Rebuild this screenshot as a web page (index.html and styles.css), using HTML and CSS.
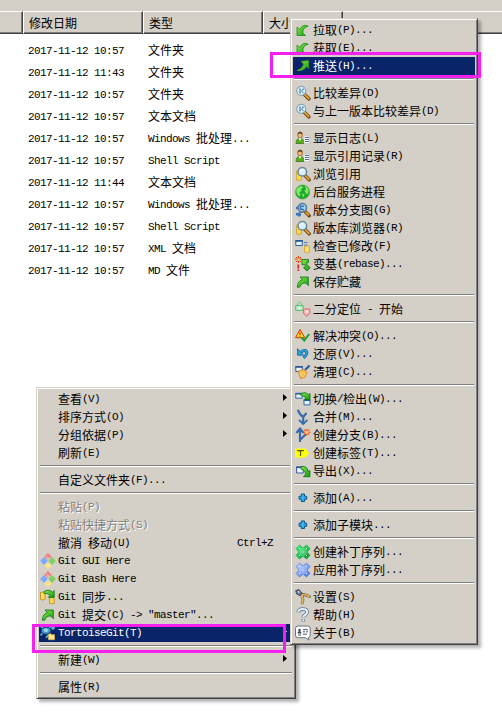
FILE: index.html
```html
<!DOCTYPE html>
<html lang="zh-CN">
<head>
<meta charset="utf-8">
<title>文件夹</title>
<link rel="stylesheet" href="styles.css">
</head>
<body>
<svg class="defs" width="0" height="0" aria-hidden="true">
  <defs>
    <linearGradient id="leaf" x1="0" y1="0" x2="1" y2="1"><stop offset="0" stop-color="#8cec4e"/><stop offset="1" stop-color="#129a10"/></linearGradient>
    <linearGradient id="sky" x1="0" y1="0" x2="1" y2="1"><stop offset="0" stop-color="#c3d4ff"/><stop offset="1" stop-color="#3b6fe8"/></linearGradient>
    <linearGradient id="mint" x1="0" y1="0" x2="1" y2="1"><stop offset="0" stop-color="#3dff78"/><stop offset="1" stop-color="#048a2c"/></linearGradient>
  </defs>
  <symbol id="pull" viewBox="0 0 16 16"><path d="M2 5v8.5h8.5L7.8 10.8Q7.8 5.5 13.2 4.2Q8 1.4 4.7 7.4z" fill="url(#leaf)" stroke="#0c8210" stroke-width=".7"/></symbol>
  <symbol id="push" viewBox="0 0 16 16"><path d="M13.6 2.4v8l-2-1.8Q8.5 13.6 2 12.5Q7.5 10.5 8.7 6L6 3.4z" fill="url(#leaf)" stroke="#4aa51a" stroke-width=".6"/></symbol>
  <symbol id="commit" viewBox="0 0 16 16"><path d="M5 3h8.3v8.6L10.8 9Q6.6 8.4 4.6 13.2H2.3Q2.5 7.2 7.4 5.5z" fill="url(#leaf)" stroke="#08720a" stroke-width=".8"/></symbol>
  <symbol id="lens" viewBox="0 0 16 16"><path d="M9.5 9.5l4.3 4.3" stroke="#70420e" stroke-width="3.6" stroke-linecap="round"/><path d="M9.8 9.6l3.9 3.9" stroke="#efae3c" stroke-width="1.7" stroke-linecap="round"/><circle cx="6.2" cy="5.8" r="4.5" fill="#d8f1fc" stroke="#8aa5b5" stroke-width="1.2"/><path d="M4 4.2h2M7 4.2h2M4 6h4M4 7.7h2M7.5 7.7h1" stroke="#34688c" stroke-width=".9"/></symbol>
  <symbol id="log" viewBox="0 0 16 16"><path d="M1 13.5q0-5 4-5.5 4 .5 4 5.5z" fill="#58ae18" stroke="#2e6d0b" stroke-width=".7"/><path d="M3.5 8h3L5 11z" fill="#fff"/><ellipse cx="5" cy="5" rx="2.3" ry="2.9" fill="#f5bd73" stroke="#7c4a15" stroke-width=".7"/><path d="M2.6 4.3q.5-3 2.9-2.5Q7.8 2 7.4 4.2L5 3.5z" fill="#644018"/><path d="M9 6h5.5v7.5H9z" fill="#f8fafc" stroke="#a9b2bd" stroke-width=".5"/><path d="M10 7.5h4M10 9.5h4M10 11.5h4" stroke="#59708a"/></symbol>
  <symbol id="browse" viewBox="0 0 16 16"><path d="M1.5 5h4l1 1v8q-2.5 1-5 0z" fill="#f7d54d" stroke="#c5981e" stroke-width=".7"/><path d="M10 9.5l4.2 4.2" stroke="#70420e" stroke-width="3.4" stroke-linecap="round"/><path d="M10.3 9.7l3.7 3.7" stroke="#efae3c" stroke-width="1.6" stroke-linecap="round"/><circle cx="7.3" cy="5.7" r="4.3" fill="#d6effa" stroke="#6e8798" stroke-width="1.5"/><path d="M5.4 5.2q1-2 3-1.5" stroke="#fff" stroke-width="1.3" fill="none"/></symbol>
  <symbol id="globe" viewBox="0 0 16 16"><circle cx="7.5" cy="8" r="7" fill="#1fa828" stroke="#3c9a40" stroke-width=".6"/><path d="M1.3 5.7Q3.5 2 6.6 2l1.6 2-2.2 1 .5 2.2-2.1 1.1L5.6 11 4 12.3Q1 9.5 1.3 5.7zM9.5 2q4 1.4 4.2 5.1l-1.3 3.5-2.2-2-.8-2 1.7-1.1zM7.1 9.2l2.7 1.3-2 3.3z" fill="#7de86a"/></symbol>
  <symbol id="graph" viewBox="0 0 16 16"><path d="M4.2 14.5v-4M1 6h5v5M1 12l5 1" stroke="#3973b9" stroke-width="2.4" fill="none"/><path d="M10 9.5l4.2 4.2" stroke="#70420e" stroke-width="3.4" stroke-linecap="round"/><path d="M10.3 9.7l3.7 3.7" stroke="#efae3c" stroke-width="1.6"/><circle cx="7.3" cy="5.7" r="4.2" fill="#a9cfe5" stroke="#557d9d" stroke-width="1.5"/><path d="M5.4 7.7V4.2h3.5M6 7l3 1" stroke="#3973b9" stroke-width="1.4" fill="none"/></symbol>
  <symbol id="check" viewBox="0 0 16 16"><path d="M.8 2.5h6.5v5H.8z" fill="#e9f2ff" stroke="#315f9c"/><path d="M.5 2h7.2v1.8H.5z" fill="#295795"/><path d="M9 4.5h3.5M9 7h3.5" stroke="#4c79aa"/><path d="M9.5 8.5q2.5-1 5 0v5.7q-2.5 1-5 0z" fill="#ffde65" stroke="#c59a29" stroke-width=".7"/></symbol>
  <symbol id="rebase" viewBox="0 0 16 16"><path d="M3.5 0v7M0 3.2h7M1 1l5 5M6 1L1 6" stroke="#ef3b0c" stroke-width="1"/><circle cx="3.5" cy="3.4" r="1.5" fill="#ffc16a"/><path d="M3.3 8.5v4M3.3 13.5V15" stroke="#e51a1a" stroke-width="1.7"/><path d="M7 3.5h6.5v3L12 5.8v2.7l3 3.2-3 3.3-3.5-3.2 1.8-.6V8.8H7z" fill="url(#leaf)" stroke="#08720a" stroke-width=".8"/></symbol>
  <symbol id="bisect" viewBox="0 0 16 16"><path d="M.7 4.5h7.5v5H.7zM2.5 4.4V2.8L4.5.9l2 1.9v1.6" fill="#b8e8bc" stroke="#63bb76"/><path d="M3.5 6h2v2h-2z" fill="#fff"/><path d="M8.5 8h6.3v4.5l-3.1 2.7-3.2-2.7z" fill="#f4b1b1" stroke="#e56c70"/><path d="M10.8 9.5h1.9v2.3h-1.9z" fill="#fff"/></symbol>
  <symbol id="resolve" viewBox="0 0 16 16"><path d="M5 1.5L9.8 9.7H.6z" fill="#ffe322" stroke="#e22b0d" stroke-width="1" stroke-linejoin="round"/><path d="M5 4.2v2.5M5 7.5v1.1" stroke="#e22b0d" stroke-width="1.3"/><path d="M6.5 9.5l2.8 3L14.2 6" fill="none" stroke="#18a12b" stroke-width="2"/></symbol>
  <symbol id="revert" viewBox="0 0 16 16"><path d="M5.5 6.6Q7.5 4 10 4.5q4.2 1.6-1.4 7.6" fill="none" stroke="#165e9d" stroke-width="3"/><path d="M2.5 2.6v6.6h6z" fill="#2aa4dc" stroke="#165e9d" stroke-width=".8"/><path d="M5.5 6.6Q7.5 4 10 4.5q4.2 1.6-1.2 7.2" fill="none" stroke="#2aa4dc" stroke-width="1.6"/></symbol>
  <symbol id="clean" viewBox="0 0 16 16"><path d="M.8 2.5h6.5v5H.8z" fill="#e9f2ff" stroke="#315f9c"/><path d="M.5 2h7.2v1.8H.5z" fill="#295795"/><path d="M10 6L14.6 1.5" stroke="#2c5b9d" stroke-width="2.2"/><path d="M3 7.2l5.6-2 3.7 3.3-2.5 4.9-4.2 1z" fill="#f5ba49" stroke="#c57a19" stroke-width=".7"/><path d="M4.7 8.8l3.9 4.4M7.1 7.6l3.1 3.4" stroke="#ffe49a"/></symbol>
  <symbol id="switch" viewBox="0 0 16 16"><path d="M.8 2.3h6.4v4.9H.8zM9 8.6h6v5.3H9z" fill="#e7f2ff" stroke="#2f69a4"/><path d="M.5 2h7v1.5h-7zM8.7 8.4h6.6V10H8.7z" fill="#246097"/><path d="M5 3.6q5-3.9 8.4.1L15 2.5v6H9.6l1.5-1.8Q8 4.7 5 3.6z" fill="url(#leaf)" stroke="#08720a" stroke-width=".8"/></symbol>
  <symbol id="merge" viewBox="0 0 16 16"><path d="M3 .8q1 4.5 5 7M11.5 4L8.2 8v6.3" fill="none" stroke="#396cae" stroke-width="2.2"/><path d="M3.9 10.8L8.2 15l4.3-4.2" fill="none" stroke="#396cae" stroke-width="1.8"/></symbol>
  <symbol id="branch" viewBox="0 0 16 16"><path d="M5 15V2M1.3 6L5 1.6 8.7 6M5.5 12.5L11 7" fill="none" stroke="#396cae" stroke-width="2.2"/><path d="M11.8 1.7v7M8.5 5.2h7M9.3 2.7l5 5M14.3 2.7l-5 5" stroke="#f04a17" stroke-width="1.1"/><circle cx="11.8" cy="5.2" r="1.7" fill="#ffc66e"/></symbol>
  <symbol id="tag" viewBox="0 0 16 16"><path d="M0 3.5h10.5l3.5 4.5-3.5 4.5H0z" fill="#ff0"/><path d="M2.2 5.7h6.6M5.5 5.7v5" stroke="#4a5707" stroke-width="1.2"/></symbol>
  <symbol id="export" viewBox="0 0 16 16"><path d="M1.6 4h6.6v6H1.6z" fill="#eaf3ff" stroke="#315f9c"/><path d="M1.1 3.6h7.5v1.5H1.1z" fill="#295795"/><path d="M6.2 3.6q6.5-.9 6.7 4.9l2-1v6.2H8.4l2-2Q10.8 7 6.2 6.2z" fill="url(#leaf)" stroke="#08720a" stroke-width=".8"/></symbol>
  <symbol id="add" viewBox="0 0 16 16"><path d="M6.3 4h3.2v2.2h2.2v3.1H9.5v2.2H6.3V9.3H4.1V6.2h2.2z" fill="#2ba5dc" stroke="#0d578f"/><path d="M7.8 5v5" stroke="#58c5ee"/></symbol>
  <symbol id="patch" viewBox="0 0 16 16"><path d="M4.5 1L8 4l3.5-3L15 4.5 12.2 8l2.8 3.5-3.5 3.5L8 12.3 4.5 15 1 11.5 3.8 8 1 4.5z" stroke-width=".6" stroke-linejoin="round"/><path d="M5 5l3-1.5L11 5l1.5 3-1.5 3-3 1.5L5 11 3.5 8z" fill="#fff" fill-opacity=".22" stroke="none"/><path d="M4 4.5h1M11 4.5h1M7.5 8h1M4 11.5h1M11 11.5h1" stroke="#fff"/></symbol>
  <symbol id="settings" viewBox="0 0 16 16"><path d="M6 5q4 .5 8.5 2.5M6 5q3 4.5 1.2 9" fill="none" stroke="#775c2c" stroke-width="2.9" stroke-linecap="round"/><path d="M6.5 5.3q4 .2 7.9 2.2M6.5 6q2.3 4.3.7 8.3" fill="none" stroke="#e6bd77" stroke-width="1.6" stroke-linecap="round"/><path d="M.7 1.5L4.2.6 7.1 4.5 5 6.7 1.5 4.9z" fill="#66758c" stroke="#323e52" stroke-width=".8"/><circle cx="3.7" cy="3.1" r="1" fill="#d3dae5"/></symbol>
  <symbol id="help" viewBox="0 0 16 16"><path d="M3.2 5.3Q3.6 2 7.8 2t4.4 3.1c0 3-3.9 2.7-3.9 5.1M8.3 12v2.5" fill="none" stroke="#58738c" stroke-width="3.6"/><path d="M3.2 5Q3.6 2 7.8 2t4.4 3.1c0 3-3.9 2.7-3.9 4.9M8.3 12.3v1.9" fill="none" stroke="#e1eff9" stroke-width="2.1"/></symbol>
  <symbol id="about" viewBox="0 0 16 16"><path d="M2.8 1h9.8q2.6 0 2.6 2.6v6.3q0 2.1-1.9 2.6l.8 2.6-3.8-2.4H2.8Q.5 12.7.5 10.2V3.6Q.5 1 2.8 1z" fill="#fff" stroke="#687180"/><circle cx="4.5" cy="5" r="1.2" fill="#38445d"/><path d="M2.5 8.5q0-2.5 2-2.5t2 2.5z" fill="#38445d"/><path d="M8 4.7h5M8 6.8h2M11 6.8h2M3 10h3M8 9.2h4" stroke="#48546b"/></symbol>
  <symbol id="git" viewBox="0 0 16 16"><path d="M8 .1l3.7 3.7L8 7 4.3 3.8z" fill="#f47f7c"/><path d="M4 4l3.8 4L4 12 .2 8z" fill="#79aaff"/><path d="M12 4l3.8 4-3.8 4-3.8-4z" fill="#82cf68"/><path d="M8 9l3.7 3.3L8 16l-3.7-3.7z" fill="#ffe680"/><path d="M6.5 3l3.5 3M8 4v8" stroke="#d4d0c8"/></symbol>
  <symbol id="sync" viewBox="0 0 16 16"><path d="M.5 3.5q2.3-1 4.6 0v7q-2.3 1-4.6 0zM9.5 9q2.3-1 4.7 0v5.3q-2.3 1-4.7 0z" fill="#ffdb50" stroke="#b38a18" stroke-width=".8"/><path d="M4 2.6q5-3 8.4.6L14.2 1.5v6.8H8.3l2-2Q8 4 4 4.4z" fill="url(#leaf)" stroke="#08720a" stroke-width=".8"/></symbol>
  <symbol id="tortoise" viewBox="0 0 16 16"><path d="M2.3 8.2L.7 10.5M9 9l-3 4M3 3L1 1.7M9 3.5l1.5-2" stroke="#65b9d2" stroke-width="1.6"/><ellipse cx="6" cy="5.7" rx="4.8" ry="3.6" fill="#4798c8" stroke="#153c70"/><path d="M3.4 4.5l2.3-1.3 2.6 1.5-.9 2.4H4.6z" fill="#91d8e7"/><circle cx="13" cy="3" r="1.8" fill="#65b9d2"/><path d="M8.5 9.5l2-1 1 1.2h3v5H8.5z" fill="#ffe68c" stroke="#d9b456" stroke-width=".7"/></symbol>
</svg>

<main class="window">
  <div class="toolbar"></div>
  <div class="columns head">
    <div></div><div>修改日期</div><div>类型</div><div>大小</div><div></div>
  </div>
  <div class="files">
    <div class="columns"><div></div><div><span>2017-11-12 10:57</span></div><div>文件夹</div></div>
    <div class="columns"><div></div><div><span>2017-11-12 11:43</span></div><div>文件夹</div></div>
    <div class="columns"><div></div><div><span>2017-11-12 10:57</span></div><div>文件夹</div></div>
    <div class="columns"><div></div><div><span>2017-11-12 10:57</span></div><div>文本文档</div></div>
    <div class="columns"><div></div><div><span>2017-11-12 10:57</span></div><div><span>Windows </span>批处理<span>...</span></div></div>
    <div class="columns"><div></div><div><span>2017-11-12 10:57</span></div><div><span>Shell Script</span></div></div>
    <div class="columns"><div></div><div><span>2017-11-12 11:44</span></div><div>文本文档</div></div>
    <div class="columns"><div></div><div><span>2017-11-12 10:57</span></div><div><span>Windows </span>批处理<span>...</span></div></div>
    <div class="columns"><div></div><div><span>2017-11-12 10:57</span></div><div><span>Shell Script</span></div></div>
    <div class="columns"><div></div><div><span>2017-11-12 10:57</span></div><div><span>XML </span>文档</div></div>
    <div class="columns"><div></div><div><span>2017-11-12 10:57</span></div><div><span>MD </span>文件</div></div>
  </div>
</main>

<ul class="menu context">
  <li class="sub">查看<span>(V)</span></li>
  <li class="sub">排序方式<span>(O)</span></li>
  <li class="sub">分组依据<span>(P)</span></li>
  <li>刷新<span>(E)</span></li>
  <li class="sep"></li>
  <li>自定义文件夹<span>(F)...</span></li>
  <li class="sep"></li>
  <li class="off">粘贴<span>(P)</span></li>
  <li class="off">粘贴快捷方式<span>(S)</span></li>
  <li>撤消<span> </span>移动<span>(U)</span><span class="key">Ctrl+Z</span></li>
  <li><svg><use href="#git"/></svg><span>Git GUI Here</span></li>
  <li><svg><use href="#git"/></svg><span>Git Bash Here</span></li>
  <li><svg><use href="#sync"/></svg><span>Git </span>同步<span>...</span></li>
  <li><svg><use href="#commit"/></svg><span>Git </span>提交<span>(C) -&gt; "master"...</span></li>
  <li class="sub on"><svg><use href="#tortoise"/></svg><span>TortoiseGit(T)</span></li>
  <li class="sep"></li>
  <li class="sub">新建<span>(W)</span></li>
  <li class="sep"></li>
  <li>属性<span>(R)</span></li>
</ul>

<ul class="menu git-menu">
  <li><svg><use href="#pull"/></svg>拉取<span>(P)...</span></li>
  <li><svg><use href="#pull"/></svg>获取<span>(E)...</span></li>
  <li class="on"><svg><use href="#push"/></svg>推送<span>(H)...</span></li>
  <li class="sep"></li>
  <li><svg><use href="#lens"/></svg>比较差异<span>(D)</span></li>
  <li><svg><use href="#lens"/></svg>与上一版本比较差异<span>(D)</span></li>
  <li class="sep"></li>
  <li><svg><use href="#log"/></svg>显示日志<span>(L)</span></li>
  <li><svg><use href="#log"/></svg>显示引用记录<span>(R)</span></li>
  <li><svg><use href="#browse"/></svg>浏览引用</li>
  <li><svg><use href="#globe"/></svg>后台服务进程</li>
  <li><svg><use href="#graph"/></svg>版本分支图<span>(G)</span></li>
  <li><svg><use href="#browse"/></svg>版本库浏览器<span>(R)</span></li>
  <li><svg><use href="#check"/></svg>检查已修改<span>(F)</span></li>
  <li><svg><use href="#rebase"/></svg>变基<span>(rebase)...</span></li>
  <li><svg><use href="#commit"/></svg>保存贮藏</li>
  <li class="sep"></li>
  <li><svg><use href="#bisect"/></svg>二分定位<span> - </span>开始</li>
  <li class="sep"></li>
  <li><svg><use href="#resolve"/></svg>解决冲突<span>(O)...</span></li>
  <li><svg><use href="#revert"/></svg>还原<span>(V)...</span></li>
  <li><svg><use href="#clean"/></svg>清理<span>(C)...</span></li>
  <li class="sep"></li>
  <li><svg><use href="#switch"/></svg>切换<span>/</span>检出<span>(W)...</span></li>
  <li><svg><use href="#merge"/></svg>合并<span>(M)...</span></li>
  <li><svg><use href="#branch"/></svg>创建分支<span>(B)...</span></li>
  <li><svg><use href="#tag"/></svg>创建标签<span>(T)...</span></li>
  <li><svg><use href="#export"/></svg>导出<span>(X)...</span></li>
  <li class="sep"></li>
  <li><svg><use href="#add"/></svg>添加<span>(A)...</span></li>
  <li class="sep"></li>
  <li><svg><use href="#add"/></svg>添加子模块<span>...</span></li>
  <li class="sep"></li>
  <li><svg class="green"><use href="#patch"/></svg>创建补丁序列<span>...</span></li>
  <li><svg class="blue"><use href="#patch"/></svg>应用补丁序列<span>...</span></li>
  <li class="sep"></li>
  <li><svg><use href="#settings"/></svg>设置<span>(S)</span></li>
  <li><svg><use href="#help"/></svg>帮助<span>(H)</span></li>
  <li><svg><use href="#about"/></svg>关于<span>(B)</span></li>
</ul>

<div class="marker marker-push"></div>
<div class="marker marker-git"></div>
</body>
</html>
```
FILE: styles.css
```css
* { box-sizing: border-box; }

body {
  margin: 0;
  height: 715px;
  overflow: hidden;
  background: #fff;
  color: #000;
  font: 12px/18px "Noto Sans CJK SC", sans-serif;
}

.defs { position: absolute; }

/* Half-width characters take exactly half of a 12px ideograph. */
span {
  font-family: "Liberation Mono", monospace;
  font-size: 11px;
  letter-spacing: -0.6px;
  white-space: pre;
}

.toolbar { height: 11px; background: #d4d0c8; }

.columns {
  display: grid;
  grid-template-columns: 23px 120px 120px 80px 1fr;
  height: 22px;
  line-height: 22px;
}
.columns > div { padding-left: 5px; white-space: nowrap; }
.files span { line-height: 1; vertical-align: 1px; }

.head { background: #d4d0c8; line-height: 21px; }
.head > div {
  padding-left: 5px;
  border-top: 1px solid #fff;
  border-left: 1px solid #fff;
  border-bottom: 1px solid #404040;
  border-right: 1px solid #404040;
  box-shadow: inset -1px -1px #808080;
}
.head > div:first-child { border-left: 0; }
.head > div:last-child { border-right: 0; border-left: 0; box-shadow: inset 0 -1px #808080; }

.files { padding-top: 6px; }

.menu {
  position: absolute;
  margin: 0;
  padding: 1px;
  list-style: none;
  background: #d4d0c8;
  border: 1px solid;
  border-color: #d4d0c8 #404040 #404040 #d4d0c8;
  box-shadow: inset 1px 1px #fff, inset -1px -1px #808080, 3px 3px 3px rgba(0, 0, 0, .3);
}
.menu li {
  display: flex;
  height: 18px;
  margin: 0 1px;
  padding-left: 20px;
}
.menu li:first-child { margin-top: 1px; }
.menu li:last-child { margin-bottom: 1px; }
.menu svg { width: 16px; height: 16px; margin: 1px 2px 0 -18px; flex: none; }
.menu .on { background: #0a246a; color: #fff; }
.menu .off { color: #808080; text-shadow: 1px 1px #fff; }
.menu .sep {
  height: 2px;
  margin: 3px 2px 4px;
  padding: 0;
  background: linear-gradient(#808080 50%, #fff 50%);
}
.menu .key { margin-left: auto; margin-right: 20px; }

.sub::after {
  content: "";
  margin: 4px 6px 0 auto;
  width: 4px;
  height: 7px;
  background: currentColor;
  clip-path: polygon(0 0, 100% 50%, 0 100%);
}

.context { left: 36px; top: 387px; width: 260px; }
.context li { padding-left: 19px; }
.git-menu { left: 290px; top: 18px; width: 188px; }

.green { fill: url(#mint); stroke: #0ca543; }
.blue { fill: url(#sky); stroke: #4c73d5; }

.marker { position: absolute; border: 3px solid #f51ff0; }
.marker-push { left: 270px; top: 52px; width: 211px; height: 26px; }
.marker-git { left: 32px; top: 624px; width: 254px; height: 29px; }
```
